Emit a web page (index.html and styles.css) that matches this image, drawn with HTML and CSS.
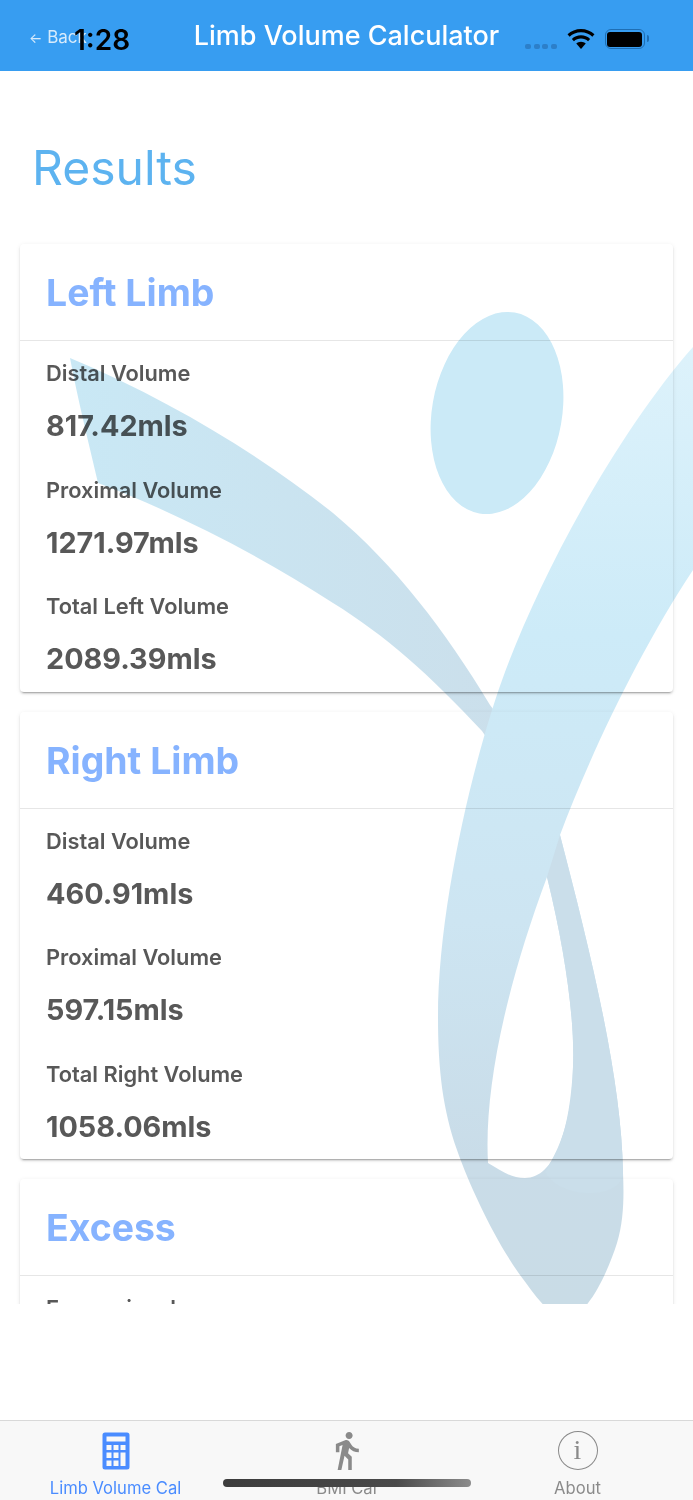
FILE: index.html
```html
<!DOCTYPE html>
<html lang="en">
<head>
  <meta charset="UTF-8" />
  <title>Limb Volume Calculator</title>
  <link rel="stylesheet" href="styles.css">
</head>
<body>
<div class="app">
  <header class="topbar">
    <a class="back" href="#"><span class="back-arrow">←</span> Back</a>
    <h1 class="topbar-title">Limb Volume Calculator</h1>
    <span class="clock">1:28</span>
    <div class="status-icons">
      <span class="signal"><i></i><i></i><i></i><i></i></span>
      <svg class="wifi" width="28" height="20" viewBox="1.200 0.500 25.600 19">
        <path d="M14 3.500c4.200 0 8 1.600 10.800 4.300l2-2.200C23.400 2.300 18.900.5 14 .5S4.600 2.300 1.200 5.600l2 2.200C6 5.100 9.800 3.500 14 3.500z"/>
        <path d="M14 9.500c2.600 0 5 1 6.700 2.600l2-2.200C20.400 7.800 17.300 6.500 14 6.500S7.600 7.800 5.300 9.900l2 2.200C9 10.500 11.400 9.500 14 9.500z"/>
        <path d="M14 12.500c-1.700 0-3.300.7-4.500 1.700L14 19.500l4.500-5.300c-1.200-1-2.800-1.700-4.500-1.700z"/>
      </svg>
      <span class="battery"><span class="battery-fill"></span></span>
    </div>
  </header>

  <main class="content">
    <h2 class="page-title">Results</h2>

    <section class="card">
      <h3 class="card-title">Left Limb</h3>
      <div class="card-body">
        <p class="label">Distal Volume</p>
        <p class="value">817.42mls</p>
        <p class="label">Proximal Volume</p>
        <p class="value">1271.97mls</p>
        <p class="label">Total Left Volume</p>
        <p class="value">2089.39mls</p>
      </div>
    </section>

    <section class="card">
      <h3 class="card-title">Right Limb</h3>
      <div class="card-body">
        <p class="label">Distal Volume</p>
        <p class="value">460.91mls</p>
        <p class="label">Proximal Volume</p>
        <p class="value">597.15mls</p>
        <p class="label">Total Right Volume</p>
        <p class="value">1058.06mls</p>
      </div>
    </section>

    <section class="card">
      <h3 class="card-title">Excess</h3>
      <div class="card-body">
        <p class="label">Excess in mls</p>
      </div>
    </section>

    <!-- watermark sits over the cards, coords are page coords minus the 71px bar -->
    <svg class="watermark" width="693" height="1233" viewBox="0 71 693 1233">
      <defs>
        <linearGradient id="armFill" x1="0" y1="0" x2="1" y2="0">
          <stop offset="0" stop-color="#c9e8f5"/>
          <stop offset="1" stop-color="#cbdfeb"/>
        </linearGradient>
        <linearGradient id="bandFill" gradientUnits="userSpaceOnUse" x1="0" y1="347" x2="0" y2="1304">
          <stop offset="0" stop-color="#ddf2fb"/>
          <stop offset="0.3" stop-color="#cdebf8"/>
          <stop offset="0.6" stop-color="#cde5f2"/>
          <stop offset="0.85" stop-color="#c9dce8"/>
          <stop offset="1" stop-color="#c9dce6"/>
        </linearGradient>
      </defs>
      <ellipse cx="497" cy="413" rx="65" ry="102" transform="rotate(10 497 413)" fill="#cbeaf7"/>
      <path fill="url(#armFill)" d="M70 358C170 400 260 455 333 513C395 565 445 630 490 705L505 725L495 750L482 731C430 675 385 635 333 603C260 555 170 510 98 483C88 440 78 400 70 358Z"/>
      <path fill="url(#bandFill)" fill-rule="evenodd" d="M693 347C620 430 545 565 505 672C478 744 438 900 438 1017C438 1070 443 1110 457 1150C470 1187 495 1240 520 1275C535 1295 550 1318 566 1318C585 1318 605 1280 617 1243C624 1220 624 1195 623 1173C622 1080 590 950 560 835C590 755 640 650 693 570Z M547 877C565 950 575 1020 573 1067C570 1130 555 1178 525 1178C510 1178 500 1170 488 1163C484 1090 505 990 547 877Z"/>
      <path fill="#cadeea" d="M560 835C590 950 622 1080 623 1173C622 1200 560 1200 545 1172C565 1140 572 1110 573 1067C575 1020 565 950 547 877Z"/>
    </svg>
  </main>

  <div class="spacer"></div>

  <nav class="tabbar">
    <a class="tab tab-active" href="#">
      <svg class="tab-icon" width="28" height="38" viewBox="0 0 28 38">
        <path fill-rule="evenodd" d="M3 .5h22A2.500 2.500 0 0 1 27.500 3v32a2.500 2.500 0 0 1-2.500 2.500H3A2.500 2.500 0 0 1 .5 35V3A2.500 2.500 0 0 1 3 .5zM4.500 4.500v5h19v-5zM4.500 13v5h5v-5zM11.500 13v5h5v-5zM18.500 13v5h5v-5zM4.500 20.500V26h5v-5.500zM11.500 20.500V26h5v-5.500zM18.500 20.500V34h5V20.500zM4.500 28.500V34h5v-5.500zM11.500 28.500V34h5v-5.500z"/>
      </svg>
      <span>Limb Volume Cal</span>
    </a>
    <a class="tab" href="#">
      <svg class="tab-icon" width="24" height="38" viewBox="5.600 1.500 13.400 21.500">
        <path d="M13.500 5.500c1.100 0 2-.9 2-2s-.9-2-2-2-2 .9-2 2 .9 2 2 2zM9.800 8.900L7 23h2.100l1.800-8 2.100 2v6h2v-7.500l-2.100-2 .6-3C14.800 12 16.800 13 19 13v-2c-1.900 0-3.500-1-4.300-2.400l-1-1.600c-.4-.6-1-1-1.700-1-.3 0-.5.100-.8.100L6 8.300V13h2V9.600l1.800-.7"/>
      </svg>
      <span>BMI Cal</span>
    </a>
    <a class="tab" href="#">
      <span class="tab-info">i</span>
      <span>About</span>
    </a>
    <span class="home-indicator"></span>
  </nav>
</div>
</body>
</html>
```

FILE: styles.css
```css
:root {
  --bar-blue: #379df1;
  --title-blue: #5db3f0;
  --card-blue: #86b3ff;
  --tab-blue: #4a8cff;
  --tab-grey: #8a8a8a;
  --text-grey: #585858;
}
* {
  box-sizing: border-box;
}
body {
  margin: 0;
  background: #ffffff;
  font-family: Inter, "Noto Sans", sans-serif;
  color: var(--text-grey);
}
a {
  text-decoration: none;
}
.app {
  height: 1500px;
  display: flex;
  flex-direction: column;
  overflow: hidden;
}

/* top bar */
.topbar {
  position: relative;
  flex: 0 0 71px;
  background: var(--bar-blue);
  display: flex;
  align-items: center;
  justify-content: center;
}
.topbar-title {
  margin: 0;
  color: #ffffff;
  font-size: 27px;
  font-weight: 500;
}
.back {
  position: absolute;
  left: 29px;
  top: 27px;
  color: #d7ebfc;
  font-size: 17px;
}
.back-arrow {
  font-size: 14px;
}
.clock {
  position: absolute;
  left: 74px;
  top: 23px;
  color: #000000;
  font-size: 28px;
  font-weight: 600;
}
.status-icons {
  position: absolute;
  left: 525px;
  top: 29px;
  display: flex;
  align-items: flex-start;
  gap: 10px;
}
.signal {
  display: flex;
  gap: 2.5px;
  margin-top: 15px;
}
.signal i {
  width: 6px;
  height: 5px;
  border-radius: 2px;
  background: #2c7fc9;
}
.battery {
  position: relative;
  width: 40px;
  height: 20px;
  padding: 1.5px;
  border: 1.5px solid #1e6eb4;
  border-radius: 6px;
}
.battery::after {
  content: "";
  position: absolute;
  right: -5px;
  top: 5px;
  width: 2px;
  height: 7px;
  border-radius: 0 2px 2px 0;
  background: #1e6eb4;
}
.battery-fill {
  display: block;
  height: 100%;
  background: #000000;
  border-radius: 3px;
}

/* results list */
.content {
  position: relative;
  flex: 0 0 1233px;
  overflow: hidden;
}
.page-title {
  margin: 0;
  padding: 68px 32px 47px;
  color: var(--title-blue);
  font-size: 48px;
  font-weight: 400;
  line-height: 58px;
}
.card {
  margin: 0 20px 20px;
  background: #ffffff;
  border-radius: 4px;
  box-shadow: 0 3px 1px -2px rgba(0, 0, 0, 0.2), 0 2px 2px 0 rgba(0, 0, 0, 0.12), 0 1px 5px 0 rgba(0, 0, 0, 0.08);
}
.card-title {
  margin: 0;
  height: 97px;
  padding: 27px 26px 0;
  border-bottom: 1px solid #e6e6e6;
  color: var(--card-blue);
  font-size: 37.4px;
  font-weight: 700;
  line-height: 44px;
}
.card-body {
  padding: 18px 26px 11px;
}
.label {
  margin: 0;
  font-size: 21.8px;
  font-weight: 600;
  line-height: 28px;
}
.value {
  margin: 0 0 28px;
  padding-top: 18px;
  font-size: 28.8px;
  font-weight: 700;
  line-height: 42.5px;
}
.value:last-child {
  margin-bottom: 0;
}
.watermark {
  position: absolute;
  left: 0;
  top: 0;
  mix-blend-mode: multiply;
  pointer-events: none;
}

.spacer {
  flex: 1;
}

/* tab bar */
.tabbar {
  position: relative;
  flex: 0 0 80px;
  display: grid;
  grid-template-columns: repeat(3, 1fr);
  background: #f8f8f8;
  border-top: 1px solid #d9d9d9;
}
.tab {
  display: flex;
  flex-direction: column;
  align-items: center;
  padding-top: 11px;
  color: var(--tab-grey);
  fill: var(--tab-grey);
  font-size: 16.6px;
  line-height: 20px;
}
.tab-active {
  color: var(--tab-blue);
  fill: var(--tab-blue);
}
.tab-icon {
  margin-bottom: 8px;
}
.tab-info {
  width: 40px;
  height: 39px;
  margin-top: -1px;
  margin-bottom: 8px;
  border: 1.5px solid var(--tab-grey);
  border-radius: 50%;
  font-family: "Liberation Serif", serif;
  font-size: 28px;
  line-height: 36px;
  text-align: center;
}
.home-indicator {
  position: absolute;
  left: 223px;
  top: 58px;
  width: 248px;
  height: 8px;
  border-radius: 4px;
  background: linear-gradient(90deg, #3c3c3c, #4a4a4a 70%, #8c8c8c);
}
```
